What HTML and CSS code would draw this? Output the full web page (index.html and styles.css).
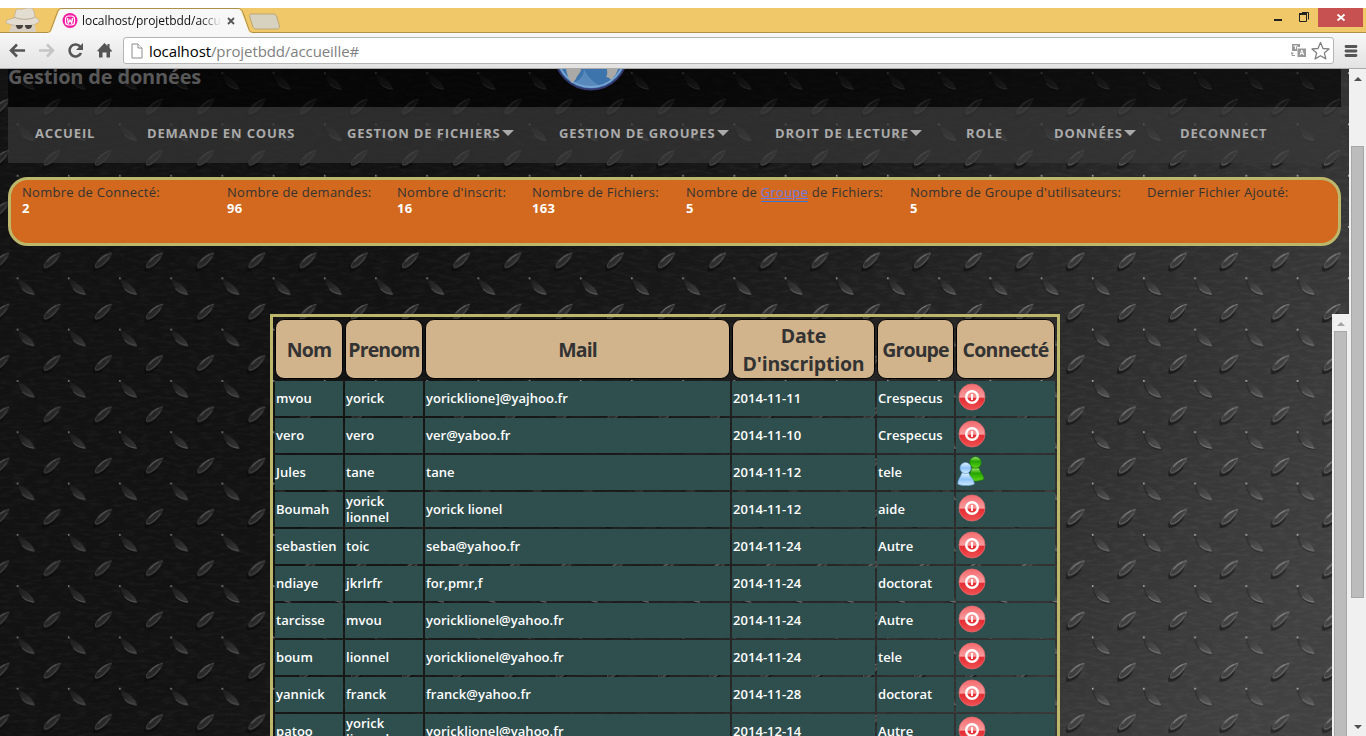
FILE: index.html
```
<!DOCTYPE html>
<html lang="fr">
<head>
<meta charset="utf-8">
<title>localhost/projetbdd/accueille</title>
<link rel="stylesheet" href="styles.css">
</head>
<body>
<svg class="defs" width="0" height="0">
  <defs>
    <linearGradient id="redGloss" x1="0" y1="0" x2="0" y2="1"><stop offset="0" stop-color="#f36a6e"/><stop offset=".5" stop-color="#f79a9c"/><stop offset=".56" stop-color="#e42c32"/><stop offset="1" stop-color="#f05254"/></linearGradient>
    <linearGradient id="blueMan" x1="0" y1="0" x2="0" y2="1"><stop offset="0" stop-color="#e4f3ff"/><stop offset=".5" stop-color="#8cc3f8"/><stop offset="1" stop-color="#d3ebff"/></linearGradient>
    <linearGradient id="greenMan" x1="0" y1="0" x2="0" y2="1"><stop offset="0" stop-color="#a5e86f"/><stop offset=".4" stop-color="#24a400"/><stop offset="1" stop-color="#5ed419"/></linearGradient>
    <symbol id="off" viewBox="0 0 28 28">
      <circle cx="14" cy="14" r="13" fill="url(#redGloss)" stroke="#e0686c" stroke-width=".8"/>
      <circle cx="14" cy="14" r="5.800" fill="none" stroke="#fff" stroke-width="2.400"/>
      <path d="M14 11v6" stroke="#fff" stroke-width="1.800"/>
    </symbol>
    <symbol id="on" viewBox="0 0 28 30">
      <path d="M11 24c1-5 3-8 4-12h7c1 4 4 6 5 11-3 2-11 3-16 1z" fill="url(#greenMan)" stroke="#188400" stroke-width=".6"/>
      <circle cx="18.500" cy="6.500" r="5.700" fill="url(#greenMan)" stroke="#188400" stroke-width=".6"/>
      <path d="M.8 28c0-5 3-7 4-11h7c1 4 5.500 6 5.500 11-3 2-13.500 2-16.500 0z" fill="url(#blueMan)" stroke="#5b9bdc" stroke-width=".6"/>
      <circle cx="8.500" cy="12" r="5.500" fill="url(#blueMan)" stroke="#5b9bdc" stroke-width=".6"/>
    </symbol>
  </defs>
</svg>

<div class="tabstrip">
  <svg width="1366" height="25" viewBox="0 0 1366 25">
    <path d="M0 24.500H47c2 0 3-.6 4-3L57 5c1-3 2-4.500 5-4.500H238c2 0 4 1 5 4l6 17c1 2 2 3 4 3h1113" fill="none" stroke="#ad9148"/>
    <path d="M47 25c3 0 4-1 5-4l6-16c1-3 2-4 4-4H238c2 0 3 1 4 4l6 16c1 3 2 4 5 4z" fill="#f7f7f7"/>
    <path d="M251 6h22c2 0 3 1 3.500 2l3 10c0 2-1 3-2 3h-21c-2 0-3-1-3.500-2l-3.500-11c-.3-1 .5-2 1.500-2z" fill="#d7d1c0" stroke="#b9a778"/>
    <path d="M12 16h23l1 8H9z" fill="#d9cfc0"/>
    <path d="M14 10L16 2c2-2 4 0 7-1s5-1 7-1c3 0 4 2 5 9l4 3v2c-4 3-9 4-16 4s-15-2-17-3l1-3z" fill="#e3dcd0" stroke="#b8aa93" stroke-width=".6"/>
    <path d="M14 9c6 3 16 3 21 0" fill="none" stroke="#b8aa93"/>
    <path d="M16 17h7c0 3-2 4-4 4s-3-2-3-4zm9 0h7c0 3-2 4-4 4s-3-2-3-4z" fill="#45413d"/>
    <circle cx="70" cy="12.500" r="7.500" fill="#f51ba2"/>
    <rect x="65.500" y="8" width="9" height="9" rx="3" fill="none" stroke="#fff" stroke-width="1.200"/>
    <path d="M67.500 10l.8 5 1.700-3 1.700 3 .8-5" fill="none" stroke="#fff" stroke-width="1.400"/>
    <path d="M228 10l6 6m0-6l-6 6" stroke="#555" stroke-width="1.800"/>
    <path d="M1274 12h8" stroke="#222" stroke-width="2"/>
    <path d="M1299.500 6.500h7v7h-7zM1302 4.500h6.500v7" fill="none" stroke="#222"/><path d="M1299 6h8" stroke="#222" stroke-width="2"/>
    <path d="M1318 0h45v19h-45z" fill="#c75050"/>
    <path d="M1337.500 6.500l7 6m0-6l-7 6" stroke="#fff" stroke-width="1.800"/>
  </svg>
  <div class="tab-title">localhost/projetbdd/accu</div>
</div>

<div class="toolbar">
  <svg class="nav-icons" width="123" height="36" viewBox="0 0 123 36" fill="none" stroke="#555" stroke-width="2.600">
    <path d="M25 17.500H12M17 11.500l-6 6 6 6"/>
    <path d="M39 17.500h13M47 11.500l6 6-6 6" stroke="#c5c5c5"/>
    <path d="M80.500 14A6 6 0 1 0 81 20"/><path d="M83 10v7h-7z" fill="#555" stroke="none"/>
    <path d="M97 18l7.500-8 3 3v-2h2v4l2.500 3-1 1-1-.5v6h-3.500v-5h-4v5H99v-6z" fill="#555" stroke="none"/>
  </svg>
  <div class="omnibox">
    <svg width="12" height="16" viewBox="0 0 12 16" fill="#fff" stroke="#8c8c8c"><path d="M1 1h6l4 4v10H1z"/><path d="M7 1v4h4"/></svg>
    <div class="url">localhost<span>/projetbdd/accueille#</span></div>
    <svg class="box-icons" width="42" height="20" viewBox="0 0 42 20">
      <path d="M1 3h8v3H6v4H1zM6.500 7.500H15V16H6.500z" fill="#999"/><path d="M2.500 5h4M4.500 5v3M9 14l1.800-5 1.800 5M9.500 12.500h2.600" stroke="#fff" fill="none"/><path d="M1 11.500v3h3M0 13l1-1.500L2.500 13" stroke="#999" fill="none"/>
      <path d="M29.500 1.500l2.500 6 6 .4-4.700 4 1.600 6-5.400-3.200-5.400 3.200 1.600-6-4.700-4 6-.4z" fill="#fff" stroke="#808080" stroke-width="1.300" stroke-linejoin="round"/>
    </svg>
  </div>
  <svg width="14" height="14" viewBox="0 0 14 14"><path d="M2 2.500h10M2 7h10M2 11.500h10" stroke="#555" stroke-width="2.800" stroke-linecap="round"/></svg>
</div>

<div class="viewport">
  <div class="page">
    <svg class="plate" width="1349" height="667" viewBox="0 69 1349 667">
      <defs>
        <linearGradient id="steel" gradientUnits="userSpaceOnUse" x1="450" y1="200" x2="1250" y2="700"><stop offset="0" stop-color="#131313"/><stop offset=".3" stop-color="#1b1b1b"/><stop offset=".7" stop-color="#303030"/><stop offset="1" stop-color="#414141"/></linearGradient>
        <linearGradient id="lug" x1="0" y1="0" x2="1" y2="1"><stop offset="0" stop-color="#fff" stop-opacity=".05"/><stop offset="1" stop-color="#fff" stop-opacity=".24"/></linearGradient>
        <linearGradient id="veil" gradientUnits="userSpaceOnUse" x1="200" y1="0" x2="1200" y2="500"><stop offset="0" stop-color="#111" stop-opacity=".32"/><stop offset="1" stop-color="#111" stop-opacity="0"/></linearGradient>
        <filter id="grain" x="0" y="0" width="100%" height="100%"><feTurbulence type="fractalNoise" baseFrequency=".08 .3" numOctaves="4" seed="5"/><feColorMatrix values="0 0 0 0 1  0 0 0 0 1  0 0 0 0 1  .3 0 0 0 -.12"/></filter>
        <pattern id="rise" patternUnits="userSpaceOnUse" width="51.2" height="51.3" x="26" y="-8.700">
          <g transform="translate(26 13)">
            <path d="M-9 8C-10 2-2-5 8-8C8 2-1 10-9 9z" transform="translate(-1 1.500)" fill="#000" opacity=".45"/>
            <path d="M-8 7.500C-9 2-1-6 8.500-8C7.500-1 0 7-8 7.500z" fill="url(#lug)"/>
            <path d="M8.500-8C-1-6-8 1-8 6C-6 9 2 3 6-4" fill="none" stroke="#fff" stroke-opacity=".26" stroke-width=".9"/>
            <path d="M-5 1C-2-3 1-5 4-6.500" fill="none" stroke="#fff" stroke-opacity=".3"/>
          </g>
        </pattern>
        <pattern id="fall" patternUnits="userSpaceOnUse" width="51.2" height="51.3" y="-8.700">
          <g transform="translate(26 39)">
            <path d="M-9-9C-9 1-1 10 9 9C9 1-1-4-9-9z" fill="#000" opacity=".35"/>
            <path d="M-8.500-9C-8 0-1 8 8.500 8C8 1-1-4-8.500-9z" fill="url(#lug)"/>
            <path d="M-4 2C0 6 4 7.500 8.500 7.500" fill="none" stroke="#fff" stroke-opacity=".25"/>
            <circle cx="-8.500" cy="-8.500" r=".9" fill="#fff" opacity=".7"/>
          </g>
        </pattern>
      </defs>
      <rect y="69" width="1349" height="667" fill="url(#steel)"/>
      <rect y="69" width="1349" height="667" filter="url(#grain)" opacity=".35"/>
      <rect y="69" width="1349" height="667" fill="url(#rise)"/>
      <rect y="69" width="1349" height="667" fill="url(#fall)"/>
      <rect y="69" width="1349" height="667" fill="url(#veil)"/>
    </svg>

    <header class="banner">
      <h1>Gestion de données</h1>
      <svg class="globe" width="76" height="22" viewBox="0 0 76 22">
        <circle cx="38" cy="-16" r="36.500" fill="#3d74ab" stroke="#343a70" stroke-width="1.800"/>
        <circle cx="38" cy="-16" r="34" fill="none" stroke="#7aa5d3" stroke-width="1.800"/>
        <path d="M13 0l15 0c0 4-4 6-5 10l-4 4C15 9 14 5 13 0zM54 0h11c-1 4-4 8-7 11-1-2-3-3-5-3 2-3 1-5 1-8z" fill="#aaa9a7"/>
        <path d="M31 0c3 7 9 13 16 17-9 4-19 1-25-4 6-3 9-7 9-13z" fill="#79a5d2" opacity=".45"/>
      </svg>
    </header>

    <nav class="menu">
      <a>ACCUEIL</a><a>DEMANDE EN COURS</a><a class="drop">GESTION DE FICHIERS</a><a class="drop">GESTION DE GROUPES</a><a class="drop">DROIT DE LECTURE</a><a>ROLE</a><a class="drop">DONNÉES</a><a>DECONNECT</a>
    </nav>

    <section class="stats">
      <div>Nombre de Connecté:<b>2</b></div>
      <div>Nombre de demandes:<b>96</b></div>
      <div>Nombre d'inscrit:<b>16</b></div>
      <div>Nombre de Fichiers:<b>163</b></div>
      <div>Nombre de <a>Groupe</a> de Fichiers:<b>5</b></div>
      <div>Nombre de Groupe d'utilisateurs:<b>5</b></div>
      <div>Dernier Fichier Ajouté:</div>
    </section>

    <div class="listing">
      <table>
        <colgroup><col class="c1"><col class="c2"><col class="c3"><col class="c4"><col class="c5"><col class="c6"></colgroup>
        <tr><th>Nom</th><th>Prenom</th><th>Mail</th><th>Date<br>D'inscription</th><th>Groupe</th><th>Connecté</th></tr>
        <tr><td>mvou</td><td>yorick</td><td>yoricklione]@yajhoo.fr</td><td>2014-11-11</td><td>Crespecus</td><td><svg class="off"><use href="#off"/></svg></td></tr>
        <tr><td>vero</td><td>vero</td><td>ver@yaboo.fr</td><td>2014-11-10</td><td>Crespecus</td><td><svg class="off"><use href="#off"/></svg></td></tr>
        <tr><td>Jules</td><td>tane</td><td>tane</td><td>2014-11-12</td><td>tele</td><td><svg class="on"><use href="#on"/></svg></td></tr>
        <tr><td>Boumah</td><td>yorick<br>lionnel</td><td>yorick lionel</td><td>2014-11-12</td><td>aide</td><td><svg class="off"><use href="#off"/></svg></td></tr>
        <tr><td>sebastien</td><td>toic</td><td>seba@yahoo.fr</td><td>2014-11-24</td><td>Autre</td><td><svg class="off"><use href="#off"/></svg></td></tr>
        <tr><td>ndiaye</td><td>jkrlrfr</td><td>for,pmr,f</td><td>2014-11-24</td><td>doctorat</td><td><svg class="off"><use href="#off"/></svg></td></tr>
        <tr><td>tarcisse</td><td>mvou</td><td>yoricklionel@yahoo.fr</td><td>2014-11-24</td><td>Autre</td><td><svg class="off"><use href="#off"/></svg></td></tr>
        <tr><td>boum</td><td>lionnel</td><td>yoricklionel@yahoo.fr</td><td>2014-11-24</td><td>tele</td><td><svg class="off"><use href="#off"/></svg></td></tr>
        <tr><td>yannick</td><td>franck</td><td>franck@yahoo.fr</td><td>2014-11-28</td><td>doctorat</td><td><svg class="off"><use href="#off"/></svg></td></tr>
        <tr><td>patoo</td><td>yorick<br>lionnel</td><td>yoricklionel@yahoo.fr</td><td>2014-12-14</td><td>Autre</td><td><svg class="off"><use href="#off"/></svg></td></tr>
      </table>
      <div class="scroll inner"><i class="up"></i><span class="thumb"></span></div>
    </div>
  </div>
  <div class="scroll outer"><i class="up"></i><span class="thumb"></span><i class="down"></i></div>
</div>
</body>
</html>
```
FILE: styles.css
```
* { box-sizing: border-box; }
body { margin: 0; padding-top: 8px; width: 1366px; height: 736px; overflow: hidden; background: #fff; display: flex; flex-direction: column; font-family: "Open Sans", sans-serif; }
svg { display: block; flex: none; }
.defs { position: absolute; }

/* browser chrome */
.tabstrip { position: relative; height: 25px; flex: none; background: #f0c869; }
.tab-title { position: absolute; left: 82px; top: 4px; width: 140px; white-space: nowrap; font-size: 12px; line-height: 17px; color: #111; letter-spacing: -.06px; -webkit-mask-image: linear-gradient(90deg, #000 118px, transparent 139px); mask-image: linear-gradient(90deg, #000 118px, transparent 139px); }
.toolbar { display: flex; align-items: center; height: 36px; flex: none; background: linear-gradient(#f7f7f7, #e3e3e3); border-bottom: 1px solid #aaa; }
.omnibox { display: flex; align-items: center; width: 1211px; height: 27px; margin-right: 10px; padding: 0 0 0 7px; background: #fff; border: 1px solid #b5b5b5; border-radius: 3px; }
.url { flex: 1; margin-left: 6px; font-size: 15px; line-height: 22px; letter-spacing: -.1px; color: #000; }
.url span { color: #808080; }

/* page */
.viewport { display: flex; height: 667px; flex: none; }
.page { position: relative; width: 1349px; height: 667px; overflow: hidden; }
.plate { position: absolute; left: 0; top: 0; z-index: -1; }
.banner { display: flex; margin: 0 8px; height: 38px; background: rgba(0,0,0,.62); }
.banner h1 { margin: -8px 0 0; width: 545px; font-size: 20px; line-height: 32px; font-weight: 700; letter-spacing: -.18px; color: #585858; white-space: nowrap; }
.menu { display: grid; grid-template-columns: 112px 200px 212px 216px 191px 88px 126px auto; height: 56px; margin: 0 8px; padding-left: 27px; background: rgba(56,56,56,.7); }
.menu a { display: flex; align-items: center; height: 52px; font-size: 13px; font-weight: 700; color: #aaa; white-space: nowrap; letter-spacing: .86px; }
.drop::after { content: ""; margin-left: 1px; border: 6px solid transparent; border-top: 6px solid #aaa; border-bottom: 0; }
.stats { display: grid; grid-template-columns: 205px 170px 135px 154px 224px 237px auto; height: 69px; margin: 14px 8px 0; padding: 4px 0 0 11px; background: #d2691e; border: 3px solid #bdb76b; border-radius: 20px; color: #333; font-size: 13px; line-height: 16px; letter-spacing: .26px; white-space: nowrap; }
.stats a { color: #6f7be0; text-decoration: underline; border-bottom: 1px solid #3b74dc; }
.stats b { display: block; color: #fff; }
.listing { display: flex; justify-content: space-between; margin-top: 68px; height: 422px; padding-left: 270px; overflow: hidden; }
table { table-layout: fixed; width: 790px; border: 3px solid #bdb76b; border-spacing: 2px; align-self: flex-start; flex: none; }
.c1 { width: 68px; } .c2 { width: 78px; } .c3 { width: 305px; } .c4 { width: 143px; } .c5 { width: 77px; } .c6 { width: 99px; }
th { height: 60px; padding: 2px 0 0; background: #d2b48c; border: 1px solid #000; border-radius: 9px; color: #333; font-size: 19.5px; line-height: 28px; font-weight: 700; letter-spacing: -.9px; white-space: nowrap; }
th:nth-child(4) { letter-spacing: -.2px; }
th:nth-child(6) { letter-spacing: -.7px; }
td { height: 35px; padding: 0 1px 2px; background: #2f4f4f; color: #fff; font-size: 13px; line-height: 16px; font-weight: 600; letter-spacing: .04px; white-space: nowrap; }
.off { width: 28px; height: 28px; margin: -1px 0 0 1px; }
.on { width: 28px; height: 30px; margin-top: -1px; }

.scroll { display: flex; flex-direction: column; align-items: center; width: 17px; background: #f0f0f0; flex: none; }
.up, .down { display: block; width: 0; border: 4px solid transparent; }
.up { margin-top: 8px; border-top: 0; border-bottom-color: #505050; }
.down { margin-top: auto; margin-bottom: 7px; border-bottom: 0; border-top-color: #505050; }
.thumb { width: 13px; background: #bcbcbc; border: 1px solid #a8a8a8; }
.inner .up { border-bottom-color: #a3a3a3; }
.inner .thumb { margin-top: 5px; flex: 1; border-bottom: 0; }
.outer .thumb { margin-top: 65px; height: 452px; }
```
